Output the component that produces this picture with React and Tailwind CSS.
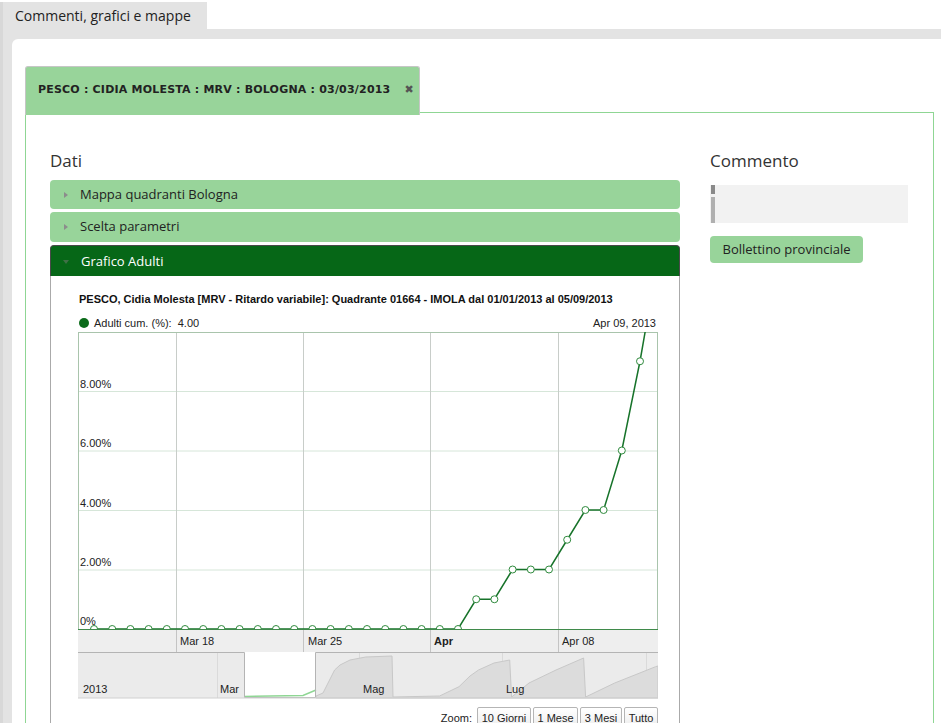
import React from "react";

// valori cumulati adulti (%) giorno per giorno, dal 13 marzo
const values = [
  0, 0, 0, 0, 0, 0, 0, 0, 0, 0, 0, 0, 0, 0, 0, 0, 0, 0, 0, 0, 0,
  1, 1, 2, 2, 2, 3, 4, 4, 6, 9, 12.5,
];
const px = (i) => 16 + 18.2 * i;
const py = (v) => 297 - v * 29.75;

function Triangle({ open, color }) {
  if (open) {
    return (
      <span
        className="w-0 h-0 border-x-[3px] border-x-transparent border-t-[4px] mr-[12px]"
        style={{ borderTopColor: color }}
      />
    );
  }
  return (
    <span
      className="w-0 h-0 border-y-[3px] border-y-transparent border-l-[4px] mr-[12px]"
      style={{ borderLeftColor: color }}
    />
  );
}

function Chart() {
  const line = values.map((v, i) => `${i ? "L" : "M"}${px(i)},${py(v)}`).join(" ");
  const vgrid = [98, 225, 352, 480];
  const hgrid = [59, 118.5, 178, 237.5];
  return (
    <svg width="580" height="367" className="block font-['Liberation_Sans',Arial,sans-serif]">
      <defs>
        <clipPath id="plot">
          <rect x="0" y="0" width="580" height="298" />
        </clipPath>
      </defs>
      {/* griglia */}
      {hgrid.map((y) => (
        <line key={y} x1="0" x2="579" y1={y + 0.5} y2={y + 0.5} stroke="#d6e6d9" />
      ))}
      {vgrid.map((x) => (
        <line key={x} x1={x + 0.5} x2={x + 0.5} y1="0" y2="320" stroke="#c8cdc9" />
      ))}
      <rect x="0.5" y="0.5" width="579" height="297" fill="none" stroke="#a9c4ac" />
      {/* etichette asse y */}
      {[
        ["8.00%", 56],
        ["6.00%", 115],
        ["4.00%", 175],
        ["2.00%", 234],
        ["0%", 293],
      ].map(([t, y]) => (
        <text key={t} x="2" y={y} fontSize="11" fill="#222">
          {t}
        </text>
      ))}
      {/* serie */}
      <g clipPath="url(#plot)">
        <path d={line} fill="none" stroke="#17732a" strokeWidth="1.5" />
        {values.slice(0, 31).map((v, i) => (
          <circle key={i} cx={px(i)} cy={py(v)} r="3.5" fill="#fff" stroke="#2f8a3d" strokeWidth="1" />
        ))}
      </g>
      <line x1="0" x2="580" y1="297.5" y2="297.5" stroke="#3f8a4a" />
      {/* asse x */}
      <rect x="0" y="298" width="580" height="22" fill="#eeeeee" />
      {vgrid.map((x) => (
        <line key={x} x1={x + 0.5} x2={x + 0.5} y1="298" y2="320" stroke="#c4c4c4" />
      ))}
      <text x="102" y="313" fontSize="11" fill="#222">Mar 18</text>
      <text x="230" y="313" fontSize="11" fill="#222">Mar 25</text>
      <text x="356" y="313" fontSize="11" fontWeight="bold" fill="#222">Apr</text>
      <text x="484" y="313" fontSize="11" fill="#222">Apr 08</text>
      {/* navigatore */}
      <rect x="0" y="320" width="580" height="46" fill="#ebebeb" />
      <rect x="166" y="320" width="72" height="46" fill="#fff" />
      {[139, 281, 424, 568].map((x) => (
        <line key={x} x1={x + 0.5} x2={x + 0.5} y1="320" y2="366" stroke="#dadada" />
      ))}
      <path
        d="M238,364 L245,361 L256.6,338 L262,333 L272,328 L287.7,325 L314,324 L315,365 L361.6,364 L381,354.7 L392,344 L400.5,338 L416,331 L431.7,328 L433.6,365 L451,351 L478,338 L505.6,326 L507.6,365 L536.7,351 L577.6,334.7 L580,334 L580,366 L238,366 Z"
        fill="#dcdcdc"
        stroke="#c8c8c8"
      />
      <path d="M166,364.5 L225,363.5 L238,358" fill="none" stroke="#8fd694" strokeWidth="1.5" />
      <path
        d="M0,320.5 L166.5,320.5 L166.5,365.5 L237.5,365.5 L237.5,320.5 L580,320.5"
        fill="none"
        stroke="#b4b4b4"
      />
      <line x1="0" x2="580" y1="366" y2="366" stroke="#d0d0d0" />
      <text x="5" y="361" fontSize="11" fill="#222">2013</text>
      <text x="142" y="361" fontSize="11" fill="#222">Mar</text>
      <text x="285" y="361" fontSize="11" fill="#222">Mag</text>
      <text x="428" y="361" fontSize="11" fill="#222">Lug</text>
    </svg>
  );
}

export default function App() {
  const zoomBtn =
    "h-[22px] border border-[#b5b5b5] rounded-[2px] bg-gradient-to-b from-white to-[#ececec] text-[11px] leading-[20px] text-[#222] text-center";
  return (
    <div className="h-[723px] overflow-hidden bg-white font-['Open_Sans',sans-serif] text-[#333]">
      {/* scheda superiore */}
      <div className="pt-[2px] flex">
        <div className="w-[207px] h-[27px] bg-[#e3e3e3] border-l-[3px] border-[#d8d8d8] pl-[12px] text-[14px] leading-[27px] text-[#222]">
          Commenti, grafici e mappe
        </div>
      </div>
      <div className="bg-[#e3e3e3] border-l-[3px] border-[#d8d8d8] pt-[10px] pl-[9px]">
        <div className="bg-white rounded-tl-[6px] pt-[27px] pl-[13px] pr-[7px] h-[700px]">
          {/* scheda pannello */}
          <div className="relative z-10 w-[395px] h-[49px] -mb-[3px] bg-[#98d49a] border border-b-0 border-[#c6c6c6] rounded-t-[3px] flex items-center pl-[12px] pb-[1px] whitespace-nowrap font-['DejaVu_Sans',sans-serif] font-bold text-[11px] tracking-[0.2px] text-[#222]">
            <span>PESCO : CIDIA MOLESTA : MRV : BOLOGNA : 03/03/2013</span>
            <span className="ml-[14px] text-[#555] text-[11px]">✖</span>
          </div>
          <div className="border border-[#8fd694] h-[620px] pt-[37px] pl-[24px] flex gap-[30px]">
            {/* colonna dati */}
            <div className="w-[630px]">
              <h2 className="text-[17px] leading-[22px] mb-[8px]">Dati</h2>
              <div className="h-[29px] rounded-[4px] bg-[#98d49a] flex items-center pl-[14px] text-[13px] text-[#222]">
                <Triangle color="#8c8c8c" />
                Mappa quadranti Bologna
              </div>
              <div className="mt-[3px] h-[30px] rounded-[4px] bg-[#98d49a] flex items-center pl-[14px] text-[13px] text-[#222]">
                <Triangle color="#8c8c8c" />
                Scelta parametri
              </div>
              <div className="mt-[3px] h-[31px] rounded-t-[4px] bg-[#066717] border border-[#4a4a4a] border-b-0 flex items-center pl-[12px] pt-[1px] text-[13px] text-white">
                <Triangle open color="#3f7046" />
                Grafico Adulti
              </div>
              <div className="border border-t-0 border-[#aaaaaa] h-[460px] pl-[27px] pt-[17px]">
                <div className="pl-[1px] font-['Liberation_Sans',Arial,sans-serif] text-[11px] leading-[13px] font-bold text-[#111]">
                  PESCO, Cidia Molesta [MRV - Ritardo variabile]: Quadrante 01664 - IMOLA dal 01/01/2013 al 05/09/2013
                </div>
                <div className="mt-[10px] w-[578px] h-[14px] flex items-center justify-between font-['Liberation_Sans',Arial,sans-serif] text-[11px] text-[#222]">
                  <div className="flex items-center">
                    <span className="ml-[1px] w-[10px] h-[10px] rounded-full bg-[#0b6b1a] mr-[5px]" />
                    <span>Adulti cum. (%):&nbsp;&nbsp;4.00</span>
                  </div>
                  <span>Apr 09, 2013</span>
                </div>
                <div className="mt-[2px]">
                  <Chart />
                </div>
                <div className="mt-[8px] w-[580px] flex justify-end items-center gap-[2px] font-['Liberation_Sans',Arial,sans-serif]">
                  <span className="text-[11px] text-[#222] mr-[3px]">Zoom:</span>
                  <button className={`${zoomBtn} w-[54px]`}>10 Giorni</button>
                  <button className={`${zoomBtn} w-[45px]`}>1 Mese</button>
                  <button className={`${zoomBtn} w-[42px]`}>3 Mesi</button>
                  <button className={`${zoomBtn} w-[34px]`}>Tutto</button>
                </div>
              </div>
            </div>
            {/* colonna commento */}
            <div className="w-[198px]">
              <h2 className="text-[17px] leading-[22px] mb-[13px]">Commento</h2>
              <div className="h-[38px] bg-[#f2f2f2] flex">
                <div className="w-[4px] flex flex-col gap-[3px] ml-[1px]">
                  <div className="h-[9px] bg-[#8a8a8a]" />
                  <div className="flex-1 bg-[#b0b0b0]" />
                </div>
              </div>
              <button className="mt-[13px] h-[27px] w-[153px] rounded-[4px] bg-[#98d49a] text-[13px] text-[#222]">
                Bollettino provinciale
              </button>
            </div>
          </div>
        </div>
      </div>
    </div>
  );
}
